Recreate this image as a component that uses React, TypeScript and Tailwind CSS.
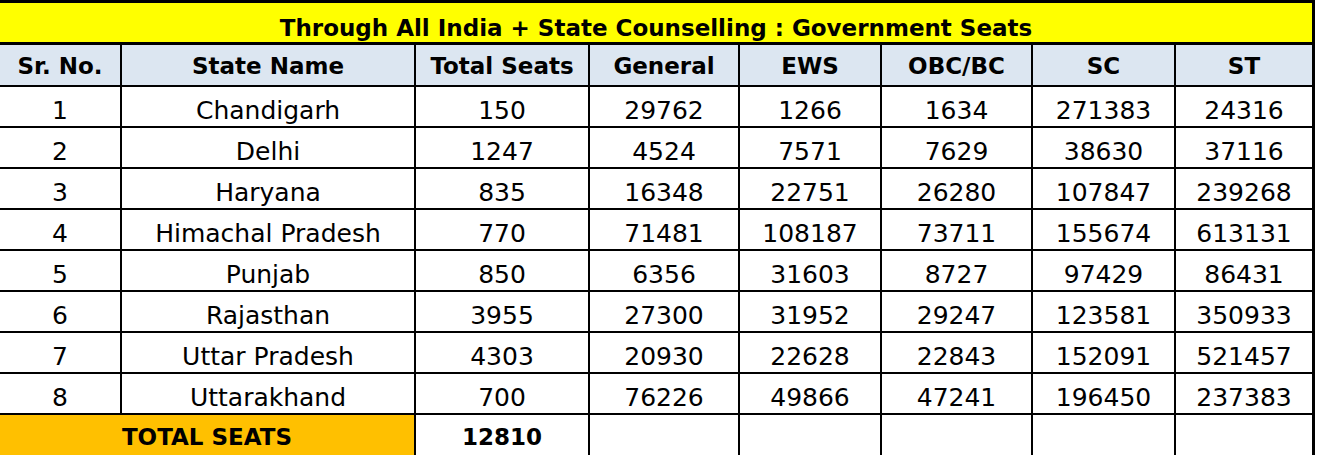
// Tabela de vagas do governo (All India + State Counselling), estilo planilha.
import { Fragment } from "react";

const linhas = [
  { sr: 1, estado: "Chandigarh", total: 150, vals: [29762, 1266, 1634, 271383, 24316] },
  { sr: 2, estado: "Delhi", total: 1247, vals: [4524, 7571, 7629, 38630, 37116] },
  { sr: 3, estado: "Haryana", total: 835, vals: [16348, 22751, 26280, 107847, 239268] },
  { sr: 4, estado: "Himachal Pradesh", total: 770, vals: [71481, 108187, 73711, 155674, 613131] },
  { sr: 5, estado: "Punjab", total: 850, vals: [6356, 31603, 8727, 97429, 86431] },
  { sr: 6, estado: "Rajasthan", total: 3955, vals: [27300, 31952, 29247, 123581, 350933] },
  { sr: 7, estado: "Uttar Pradesh", total: 4303, vals: [20930, 22628, 22843, 152091, 521457] },
  { sr: 8, estado: "Uttarakhand", total: 700, vals: [76226, 49866, 47241, 196450, 237383] },
];

const cabecalho = ["Sr. No.", "State Name", "Total Seats", "General", "EWS", "OBC/BC", "SC", "ST"];

const fonte = { fontFamily: '"DejaVu Sans", "Liberation Sans", sans-serif' };

function Celula({ children }: { children?: React.ReactNode }) {
  return (
    <div className="flex items-center justify-center bg-white pt-[7px] text-[25px] leading-none text-black">
      {children}
    </div>
  );
}

export default function App() {
  return (
    <div className="h-[455px] w-[1318px] overflow-hidden bg-white" style={fonte}>
      <div className="w-[1315px] bg-black pr-[3px] pt-[3px]">
        <div className="flex h-[39px] items-center justify-center bg-[#ffff00] pt-[12px] text-[23px] font-bold leading-none text-black">
          Through All India + State Counselling : Government Seats
        </div>

        <div className="mt-[3px] grid grid-cols-[120px_292px_172px_148px_140px_149px_141px_136px] grid-rows-[40px_repeat(8,39px)_40px] gap-[2px]">
          {cabecalho.map((h) => (
            <div
              key={h}
              className="flex items-center justify-center bg-[#dce6f1] pt-[3px] text-[23px] font-bold leading-none text-black"
            >
              {h}
            </div>
          ))}

          {linhas.map((l) => (
            <Fragment key={l.sr}>
              <Celula>{l.sr}</Celula>
              <Celula>{l.estado}</Celula>
              <Celula>{l.total}</Celula>
              {l.vals.map((v, i) => (
                <Celula key={i}>{v}</Celula>
              ))}
            </Fragment>
          ))}

          <div className="col-span-2 flex items-center justify-center bg-[#ffc000] pt-[5px] text-[23px] font-bold leading-none text-black">
            TOTAL SEATS
          </div>
          <div className="flex items-center justify-center bg-white pt-[5px] text-[23px] font-bold leading-none text-black">
            12810
          </div>
          <div className="bg-white" />
          <div className="bg-white" />
          <div className="bg-white" />
          <div className="bg-white" />
          <div className="bg-white" />
        </div>
      </div>
    </div>
  );
}
